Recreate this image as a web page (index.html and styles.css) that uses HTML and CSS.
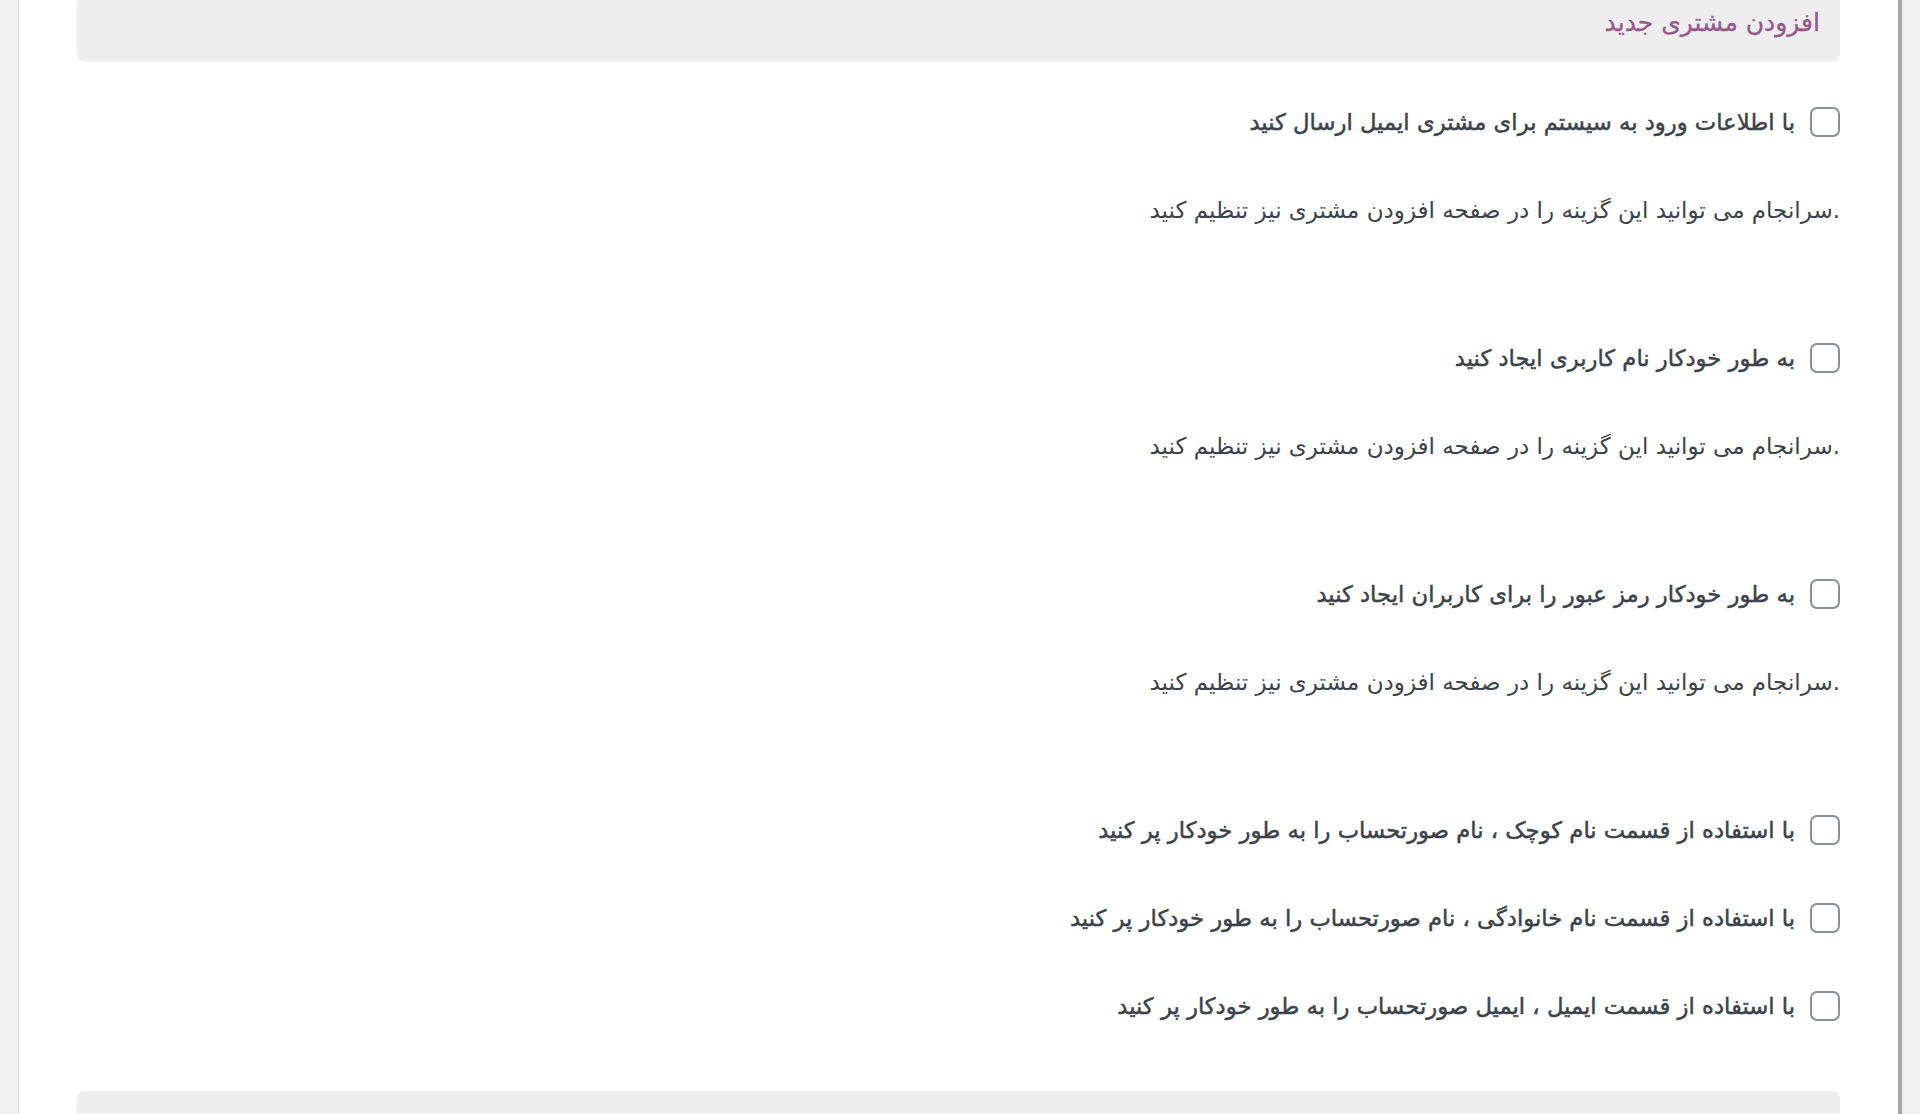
FILE: index.html
```html
<!DOCTYPE html>
<html lang="fa" dir="rtl">
  <head>
    <meta charset="UTF-8" />
    <meta name="viewport" content="width=device-width, initial-scale=1.0" />
    <title>افزودن مشتری جدید</title>
    <link rel="stylesheet" href="styles.css">
  </head>
  <body>
    <div class="panel">
      <div class="section-head">
        <h2>افزودن مشتری جدید</h2>
      </div>

      <div class="settings">
        <label class="option">
          <input type="checkbox" />
          <span>با اطلاعات ورود به سیستم برای مشتری ایمیل ارسال کنید</span>
        </label>
        <p class="desc">.سرانجام می توانید این گزینه را در صفحه افزودن مشتری نیز تنظیم کنید</p>

        <label class="option">
          <input type="checkbox" />
          <span>به طور خودکار نام کاربری ایجاد کنید</span>
        </label>
        <p class="desc">.سرانجام می توانید این گزینه را در صفحه افزودن مشتری نیز تنظیم کنید</p>

        <label class="option">
          <input type="checkbox" />
          <span>به طور خودکار رمز عبور را برای کاربران ایجاد کنید</span>
        </label>
        <p class="desc">.سرانجام می توانید این گزینه را در صفحه افزودن مشتری نیز تنظیم کنید</p>

        <label class="option">
          <input type="checkbox" />
          <span>با استفاده از قسمت نام کوچک ، نام صورتحساب را به طور خودکار پر کنید</span>
        </label>
        <label class="option">
          <input type="checkbox" />
          <span>با استفاده از قسمت نام خانوادگی ، نام صورتحساب را به طور خودکار پر کنید</span>
        </label>
        <label class="option">
          <input type="checkbox" />
          <span>با استفاده از قسمت ایمیل ، ایمیل صورتحساب را به طور خودکار پر کنید</span>
        </label>
      </div>

      <div class="section-head next"></div>
    </div>
  </body>
</html>
```

FILE: styles.css
```css
html,
body {
  height: 100%;
}

body {
  font-family: "DejaVu Sans", "Noto Sans", sans-serif;
  background: #f0f0f1;
  margin: 0;
  color: #3c434a;
  overflow: hidden;
}

.panel {
  background: #fff;
  margin: 0 18px;
  height: 100%;
  border-left: 1px solid #dcdcde;
  border-right: 4px solid #a7a7a7;
  padding: 0 58px;
  box-sizing: border-box;
}

.section-head {
  background: #eeeeee;
  height: 61px;
  border-radius: 0 0 7px 7px;
  box-shadow: 0 1px 1px rgba(0, 0, 0, 0.04);
  padding-right: 20px;
  box-sizing: border-box;
}

.section-head h2 {
  margin: 0;
  font-size: 25px;
  font-weight: 400;
  line-height: 46px;
  color: #96588a;
  -webkit-text-stroke: 0.3px #96588a;
}

.section-head.next {
  margin-top: 70px;
  height: 22px;
  border-radius: 7px 7px 0 0;
}

.settings {
  display: flex;
  flex-direction: column;
  align-items: flex-start;
  gap: 58px;
  padding-top: 46px;
}

.option {
  display: flex;
  align-items: center;
  gap: 15px;
  height: 30px;
  font-size: 22.7px;
  font-weight: 400;
  color: #3c434a;
  -webkit-text-stroke: 0.5px #3c434a;
  cursor: pointer;
}

.option input {
  -webkit-appearance: none;
  appearance: none;
  width: 30px;
  height: 30px;
  margin: 0;
  border: 2px solid #8c8f94;
  border-radius: 7px;
  background: #fff;
  flex-shrink: 0;
}

.option input:checked {
  background: #96588a;
  border-color: #96588a;
}

.desc {
  margin: 0 0 60px;
  font-size: 23px;
  line-height: 30px;
  color: #3c434a;
}
```
